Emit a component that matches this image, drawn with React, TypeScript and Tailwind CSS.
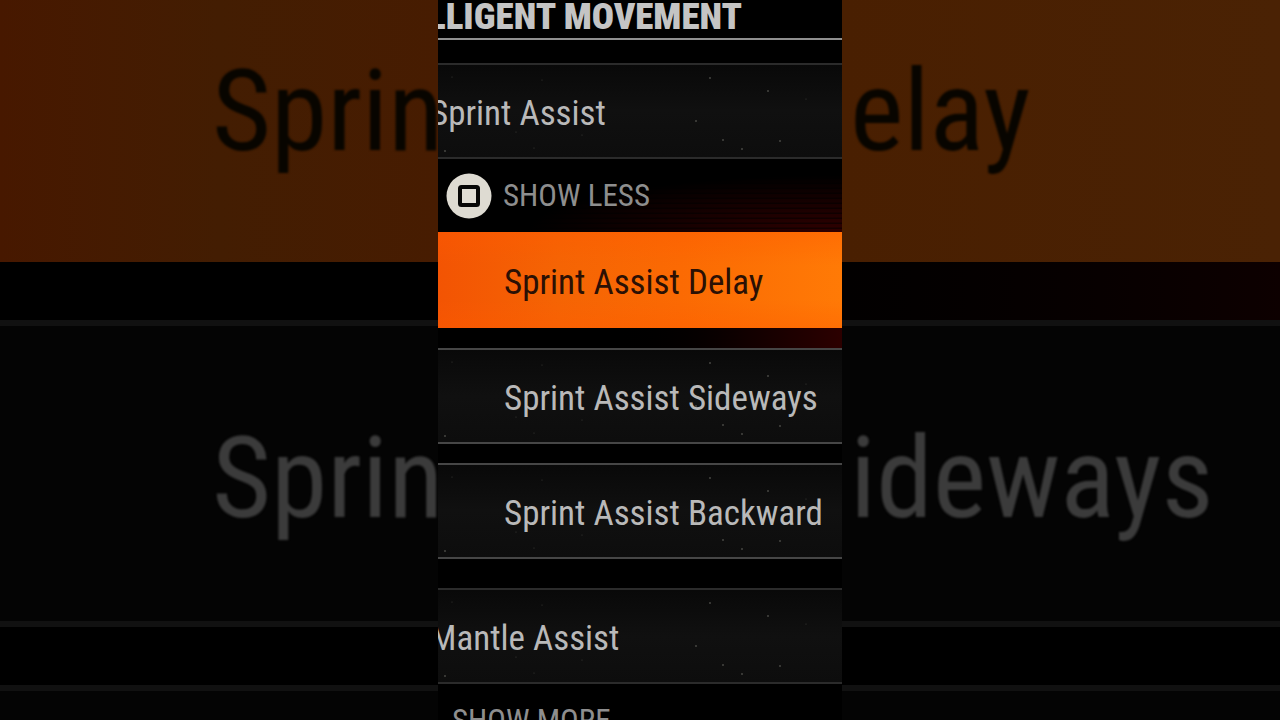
import { useState } from "react";
import { clsx } from "clsx";

interface Speck {
  x: number;
  y: number;
  r: number;
}

const SPECKS: Speck[] = [
  { x: 14, y: 12, r: 1 },
  { x: 104, y: 15, r: 1 },
  { x: 272, y: 13, r: 2 },
  { x: 330, y: 26, r: 2 },
  { x: 368, y: 34, r: 1 },
  { x: 258, y: 56, r: 2 },
  { x: 78, y: 67, r: 1 },
  { x: 144, y: 70, r: 1 },
  { x: 285, y: 75, r: 2 },
  { x: 342, y: 76, r: 2 },
  { x: 304, y: 84, r: 2 },
  { x: 7, y: 86, r: 2 },
  { x: 96, y: 83, r: 1 },
];

function Grain() {
  return (
    <svg aria-hidden="true" className="pointer-events-none absolute inset-0 size-full">
      {SPECKS.map((s) => (
        <circle key={`${s.x}-${s.y}`} cx={s.x} cy={s.y} r={s.r / 2} fill="#6a6a66" opacity="0.6" />
      ))}
    </svg>
  );
}

function SquareButtonIcon() {
  return (
    <svg aria-hidden="true" viewBox="0 0 46 46" className="size-[46px] shrink-0">
      <circle cx="23" cy="23" r="22.5" fill="#dedbd2" />
      <rect x="14" y="14" width="18" height="18" rx="1.5" fill="#e0ddd4" stroke="#070707" strokeWidth="4" />
    </svg>
  );
}

interface SettingRowProps {
  label: string;
  nested?: boolean;
  active?: boolean;
  onSelect: (label: string) => void;
}

function SettingRow({ label, nested, active, onSelect }: SettingRowProps) {
  return (
    <button
      type="button"
      onClick={() => onSelect(label)}
      className={clsx(
        "relative flex h-24 w-full shrink-0 cursor-pointer items-center pt-1.5 text-left text-[35px] leading-10 whitespace-nowrap",
        nested && "pl-[66px]",
        active
          ? "bg-[linear-gradient(to_bottom,#ff5a0066,#ff6a0000_35%,#ff6a0000_70%,#ff5a0055),linear-gradient(to_right,#f35403,#f56404_30%,#fb6a03_60%,#ff7a06)] text-[#2b1004]"
          : "border-y-2 bg-linear-to-b from-[#090909] via-[#101010] to-[#0d0d0d] text-[#b9b9b9]",
        !active && (nested ? "border-[#464646]" : "border-[#2b2b2b]")
      )}
    >
      {!active && <Grain />}
      <span className={clsx(!nested && "-ml-2")}>{label}</span>
    </button>
  );
}

interface SidePanelProps {
  top: string;
  bottom: string;
  side: "left" | "right";
}

// Enlarged, dimmed view of the rows on either side of the menu
function SidePanel({ top, bottom, side }: SidePanelProps) {
  const inset = side === "left" ? "pl-[212px]" : "pl-2";

  return (
    <div
      aria-hidden="true"
      className="flex h-screen min-w-0 flex-1 flex-col overflow-hidden bg-black text-[114px] leading-[120px] whitespace-nowrap"
    >
      <div
        className={clsx(
          "flex h-[262px] shrink-0 items-start pt-[51px] text-[#080500]",
          side === "left"
            ? "bg-linear-to-r from-[#471800] via-[#431d02] to-[#471c01]"
            : "bg-linear-to-r from-[#491f01] to-[#4a2204]",
          inset
        )}
      >
        <span className="blur-[1px]">{top}</span>
      </div>
      <div className={clsx("h-[58px] shrink-0", side === "right" && "bg-linear-to-r from-[#020000] to-[#0d0000]")} />
      <div
        className={clsx(
          "flex h-[307px] shrink-0 items-center border-y-6 border-[#111111] bg-[#040404] pt-2 text-[#3b3b3b]",
          inset
        )}
      >
        <span className="blur-[1px]">{bottom}</span>
      </div>
      <div className="mt-[58px] h-[307px] shrink-0 border-y-6 border-[#111111] bg-[#040404]" />
    </div>
  );
}

export default function App() {
  const [selected, setSelected] = useState("Sprint Assist Delay");

  return (
    <main className="flex h-screen overflow-hidden bg-black font-['Roboto_Condensed','Liberation_Sans_Narrow',sans-serif]">
      <SidePanel side="left" top="Sprin" bottom="Sprin" />

      <section className="flex aspect-[101/180] h-screen shrink-0 flex-col overflow-hidden bg-black">
        <header className="flex h-10 shrink-0 items-center justify-end border-b-2 border-[#8f8f8f] pr-[100px] pb-1">
          <h1 className="text-[37px] leading-10 font-black whitespace-nowrap text-[#c4c4c4]">INTELLIGENT MOVEMENT</h1>
        </header>

        <div className="mt-[23px] flex flex-col">
          <SettingRow label="Sprint Assist" active={selected === "Sprint Assist"} onSelect={setSelected} />

          <button
            type="button"
            className="flex h-[73px] w-full shrink-0 cursor-pointer items-center gap-[11px] bg-[repeating-linear-gradient(to_bottom,#00000000_0px,#00000000_3px,#00000088_4px,#00000088_5px),radial-gradient(ellipse_at_bottom_right,#300000,#000_55%)] pl-2 text-[31px] leading-10 whitespace-nowrap text-[#8e8e8e]"
          >
            <SquareButtonIcon />
            SHOW LESS
          </button>

          <SettingRow label="Sprint Assist Delay" nested active={selected === "Sprint Assist Delay"} onSelect={setSelected} />
          <div className="h-5 bg-linear-to-r from-black from-40% to-[#2c0000]" />
          <SettingRow label="Sprint Assist Sideways" nested active={selected === "Sprint Assist Sideways"} onSelect={setSelected} />
          <div className="h-[19px]" />
          <SettingRow label="Sprint Assist Backward" nested active={selected === "Sprint Assist Backward"} onSelect={setSelected} />
          <div className="h-[29px]" />
          <SettingRow label="Mantle Assist" active={selected === "Mantle Assist"} onSelect={setSelected} />

          <button
            type="button"
            className="flex h-[73px] w-full shrink-0 cursor-pointer items-center pl-[14px] text-[31px] leading-10 whitespace-nowrap text-[#8e8e8e]"
          >
            SHOW MORE
          </button>
        </div>
      </section>

      <SidePanel side="right" top="elay" bottom="ideways" />
    </main>
  );
}
